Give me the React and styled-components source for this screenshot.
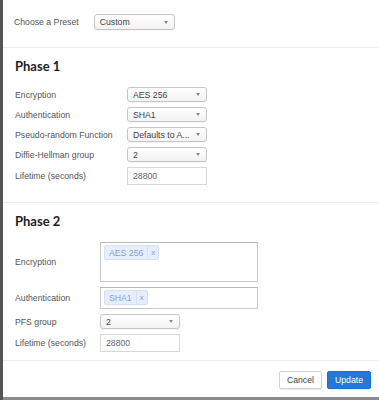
import React from 'react';
import styled, { createGlobalStyle } from 'styled-components';

const GlobalStyle = createGlobalStyle`
  html, body {
    margin: 0;
    padding: 0;
    background: #8a8a8a;
  }
  body {
    font-family: "Liberation Sans", Arial, sans-serif;
  }
`;

const Backdrop = styled.div`
  width: 379px;
  height: 400px;
  background: #8c8c8c;
  border-left: 3px solid #555;
  box-sizing: border-box;
  overflow: hidden;
`;

const Modal = styled.div`
  width: 376px;
  height: 397px;
  background: #fff;
  display: flex;
  flex-direction: column;
  font-size: 8.7px;
  color: #4a4a4a;
`;

const PresetRow = styled.div`
  height: 48px;
  box-sizing: border-box;
  padding: 14px 0 0 11px;
  display: flex;
  align-items: flex-start;
  border-bottom: 1px solid #ececec;
  gap: 15px;
`;

const Section = styled.section`
  padding: 9px 0 0 12px;
  height: ${p => p.$height}px;
  box-sizing: border-box;
  border-bottom: 1px solid #ececec;
`;

const Heading = styled.h2`
  margin: 0 0 11px 0;
  font-family: Lato, "Open Sans", sans-serif;
  font-weight: 700;
  font-size: 13px;
  line-height: 19px;
  color: #222;
`;

const Form = styled.div`
  display: grid;
  grid-template-columns: ${p => p.$labelWidth}px auto;
  row-gap: ${p => p.$gap}px;
  align-items: center;
  justify-items: start;
`;

const Label = styled.span`
  font-size: 8.7px;
  color: #555;
  line-height: 12px;
  white-space: nowrap;
`;

const SelectBox = styled.div`
  width: ${p => p.$width}px;
  height: ${p => p.$height || 15}px;
  box-sizing: border-box;
  border: 1px solid #c6c6c6;
  border-radius: 3px;
  background: linear-gradient(#ffffff, #f2f2f2);
  display: flex;
  align-items: center;
  justify-content: space-between;
  padding: 0 6px 0 5px;
  font-size: 8.7px;
  color: #444;
  box-shadow: 0 1px 0 rgba(0, 0, 0, 0.04);
`;

const Arrow = styled.span`
  width: 0;
  height: 0;
  border-left: 2.5px solid transparent;
  border-right: 2.5px solid transparent;
  border-top: 3px solid #8a8a8a;
`;

const TextInput = styled.div`
  width: ${p => p.$width}px;
  height: 18px;
  box-sizing: border-box;
  border: 1px solid #d8d8d8;
  background: #fff;
  display: flex;
  align-items: center;
  padding-left: 5px;
  font-size: 8.7px;
  color: #666;
`;

const TagBox = styled.div`
  width: 158px;
  height: ${p => p.$height}px;
  box-sizing: border-box;
  border: 1px solid #c9c9c9;
  border-top-color: #b9b9b9;
  background: #fff;
  padding: 2px 3px;
  display: flex;
  align-items: flex-start;
`;

const Chip = styled.div`
  display: flex;
  align-items: stretch;
  height: 15px;
  border: 1px solid #d3e0f7;
  border-radius: 2px;
  background: #e6eefc;
  color: #7f9fe0;
  font-size: 8.7px;
  box-sizing: border-box;
`;

const ChipText = styled.span`
  display: flex;
  align-items: center;
  padding: 0 4px;
`;

const ChipClose = styled.span`
  display: flex;
  align-items: center;
  padding: 0 3px 1px 3px;
  border-left: 1px solid #d3e0f7;
  font-size: 8px;
`;

const Footer = styled.div`
  flex: 1;
  display: flex;
  justify-content: flex-end;
  align-items: flex-start;
  padding: 10px 8px 0 0;
  gap: 5px;
`;

const Button = styled.button`
  height: 18px;
  padding: 0 ${p => p.$pad}px;
  box-sizing: border-box;
  font-family: "Liberation Sans", Arial, sans-serif;
  font-size: 8.7px;
  border-radius: 2px;
  border: 1px solid ${p => (p.$primary ? '#1f6fd0' : '#d2d2d2')};
  background: ${p => (p.$primary ? '#2378db' : '#fff')};
  color: ${p => (p.$primary ? '#fff' : '#444')};
  box-shadow: 0 1px 1px rgba(0, 0, 0, 0.08);
`;

const Select = ({ value, width = 80, height }) => (
  <SelectBox $width={width} $height={height}>
    <span>{value}</span>
    <Arrow />
  </SelectBox>
);

const Tag = ({ children }) => (
  <Chip>
    <ChipText>{children}</ChipText>
    <ChipClose>x</ChipClose>
  </Chip>
);

const PresetLabel = styled(Label)`
  margin-top: 2px;
`;

export default function App() {
  return (
    <>
      <GlobalStyle />
      <Backdrop>
        <Modal>
          <PresetRow>
            <PresetLabel>Choose a Preset</PresetLabel>
            <Select value="Custom" width={81} height={16} />
          </PresetRow>

          <Section $height={155}>
            <Heading>Phase 1</Heading>
            <Form $labelWidth={112} $gap={5}>
              <Label>Encryption</Label>
              <Select value="AES 256" />
              <Label>Authentication</Label>
              <Select value="SHA1" />
              <Label>Pseudo-random Function</Label>
              <Select value="Defaults to A..." />
              <Label>Diffie-Hellman group</Label>
              <Select value="2" />
              <Label>Lifetime (seconds)</Label>
              <TextInput $width={80}>28800</TextInput>
            </Form>
          </Section>

          <Section $height={158}>
            <Heading>Phase 2</Heading>
            <Form $labelWidth={85} $gap={5}>
              <Label>Encryption</Label>
              <TagBox $height={40}>
                <Tag>AES 256</Tag>
              </TagBox>
              <Label>Authentication</Label>
              <TagBox $height={22}>
                <Tag>SHA1</Tag>
              </TagBox>
              <Label>PFS group</Label>
              <Select value="2" />
              <Label>Lifetime (seconds)</Label>
              <TextInput $width={80}>28800</TextInput>
            </Form>
          </Section>

          <Footer>
            <Button $pad={7}>Cancel</Button>
            <Button $primary $pad={7}>Update</Button>
          </Footer>
        </Modal>
      </Backdrop>
    </>
  );
}
